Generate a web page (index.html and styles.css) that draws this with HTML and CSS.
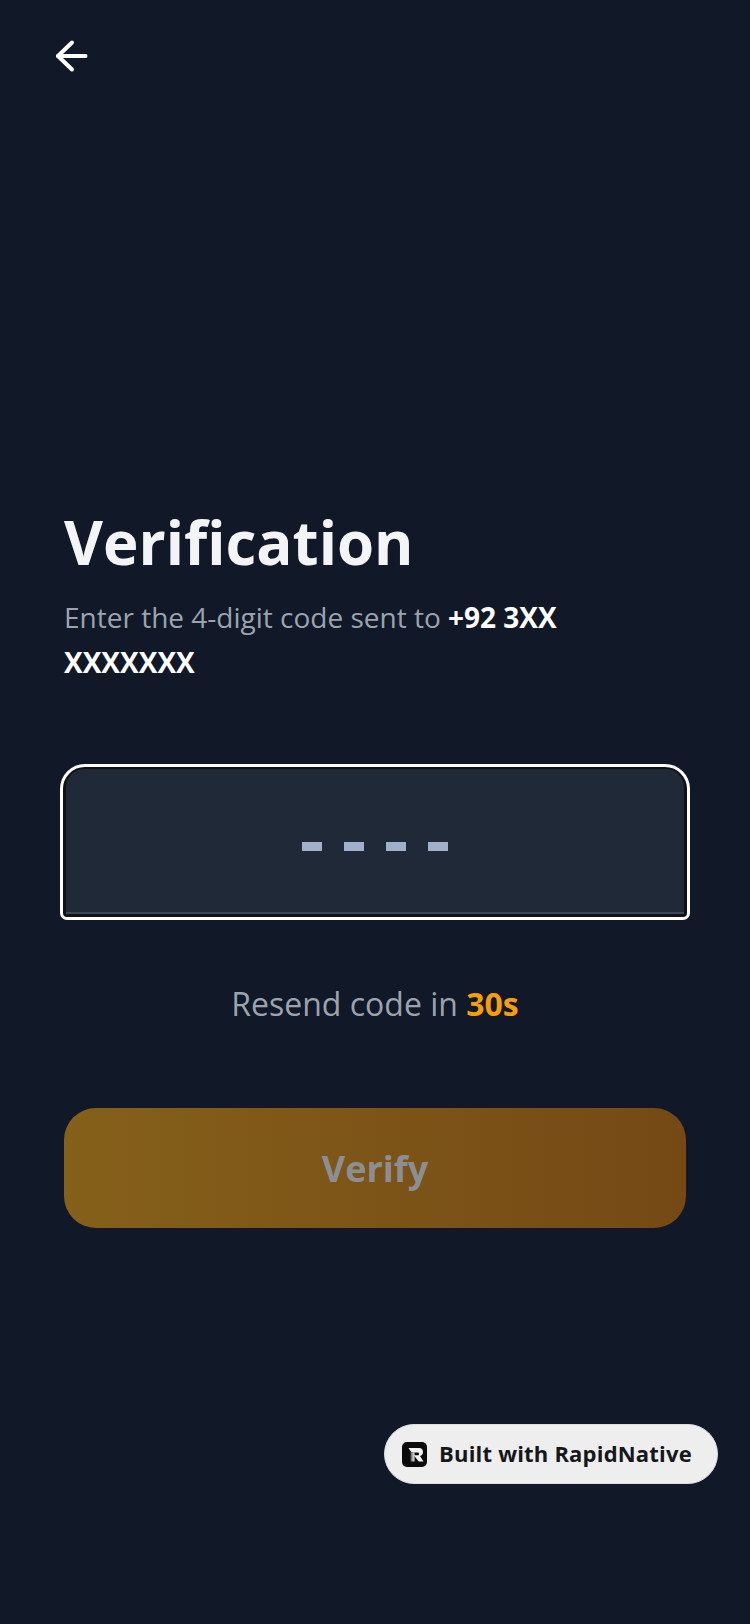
FILE: index.html
```html
<!DOCTYPE html>
<html lang="en">
<head>
<meta charset="utf-8">
<title>Verification</title>
<link rel="stylesheet" href="styles.css">
</head>
<body>
<div class="screen">
  <header class="topbar">
    <svg class="back" width="36" height="36" viewBox="0 0 36 36" fill="none" stroke="#fff" stroke-width="4" stroke-linecap="round" stroke-linejoin="round"><path d="M31.5 18H4"/><path d="M18 4.500 4 18l14 13.500"/></svg>
  </header>
  <main class="content">
    <h1 class="title">Verification</h1>
    <p class="subtitle">Enter the 4-digit code sent to <strong>+92 3XX XXXXXXX</strong></p>
    <div class="otp-ring">
      <div class="otp-input">
        <span class="dash"></span><span class="dash"></span><span class="dash"></span><span class="dash"></span>
      </div>
    </div>
    <p class="resend">Resend code in <strong>30s</strong></p>
    <div class="verify"><span class="verify-label">Verify</span></div>
  </main>
  <div class="badge">
    <svg class="badge-logo" width="25" height="25" viewBox="0 0 25 25">
      <defs><linearGradient id="stem" x1="0" y1="0" x2="1" y2="0"><stop offset="0" stop-color="#555"/><stop offset="1" stop-color="#f2f2f2"/></linearGradient></defs>
      <rect width="25" height="25" rx="5" fill="#0b0b0c"/>
      <path d="M6.500 6H17c2.600 0 4 1.600 4 3.900 0 2.100-1.100 3.500-3 4l3.500 5.600h-4.800L11.800 13.200h3.900c.9 0 1.300-.6 1.300-1.300 0-.8-.4-1.400-1.300-1.400H9.500z" fill="#f2f2f2"/>
      <path d="M8.500 10.500h4v9h-4z" fill="url(#stem)"/>
    </svg>
    <span class="badge-text">Built with RapidNative</span>
  </div>
</div>
</body>
</html>
```
FILE: styles.css
```css
* { box-sizing: border-box; }
html, body { margin: 0; padding: 0; }
body { background: #111827; font-family: "Open Sans", sans-serif; }
.screen { position: relative; width: 750px; height: 1624px; background: #111827; overflow: hidden; }
.topbar { padding: 38px 0 0 54px; height: 76px; }
.back { display: block; }
.content { padding: 426px 64px 0; }
.title { margin: 0; font-size: 60px; line-height: 80px; font-weight: 700; color: #f3f4f6; }
.subtitle { margin: 13px 0 0; width: 540px; font-size: 28px; line-height: 45px; color: #9ca3af; }
.subtitle strong { color: #fff; font-weight: 700; }
.otp-ring { margin: 79px -4px 0; height: 156px; border: 3px solid #fff; border-radius: 25px 25px 7px 7px; background: #0f1114; padding: 2px 3px 3px; }
.otp-input { height: 100%; background: #1f2937; border-radius: 18px 18px 0 0; border-bottom: 2px solid #3c4656; padding-top: 12px; display: flex; justify-content: center; align-items: center; gap: 22px; }
.dash { width: 20px; height: 9px; background: #9fb0c8; }
.resend { margin: 62px 0 0; text-align: center; font-size: 32px; line-height: 44px; color: #9ca3af; }
.resend strong { color: #f59e0b; font-weight: 700; }
.verify { margin: 82px 0 0; height: 120px; border-radius: 32px; background: linear-gradient(90deg, #85601a, #754915); display: flex; align-items: center; justify-content: center; }
.verify-label { font-size: 36px; font-weight: 700; color: #8b8f93; }
.badge { position: absolute; left: 384px; top: 1424px; width: 334px; height: 60px; border-radius: 30px; background: #eeeeef; border: 1px solid #dcdee2; display: flex; align-items: center; gap: 12px; padding-left: 17px; }
.badge-logo { display: block; flex: none; }
.badge-text { font-size: 22px; font-weight: 700; line-height: 28px; margin-top: -2px; color: #15171b; letter-spacing: 0.2px; white-space: nowrap; }
```
